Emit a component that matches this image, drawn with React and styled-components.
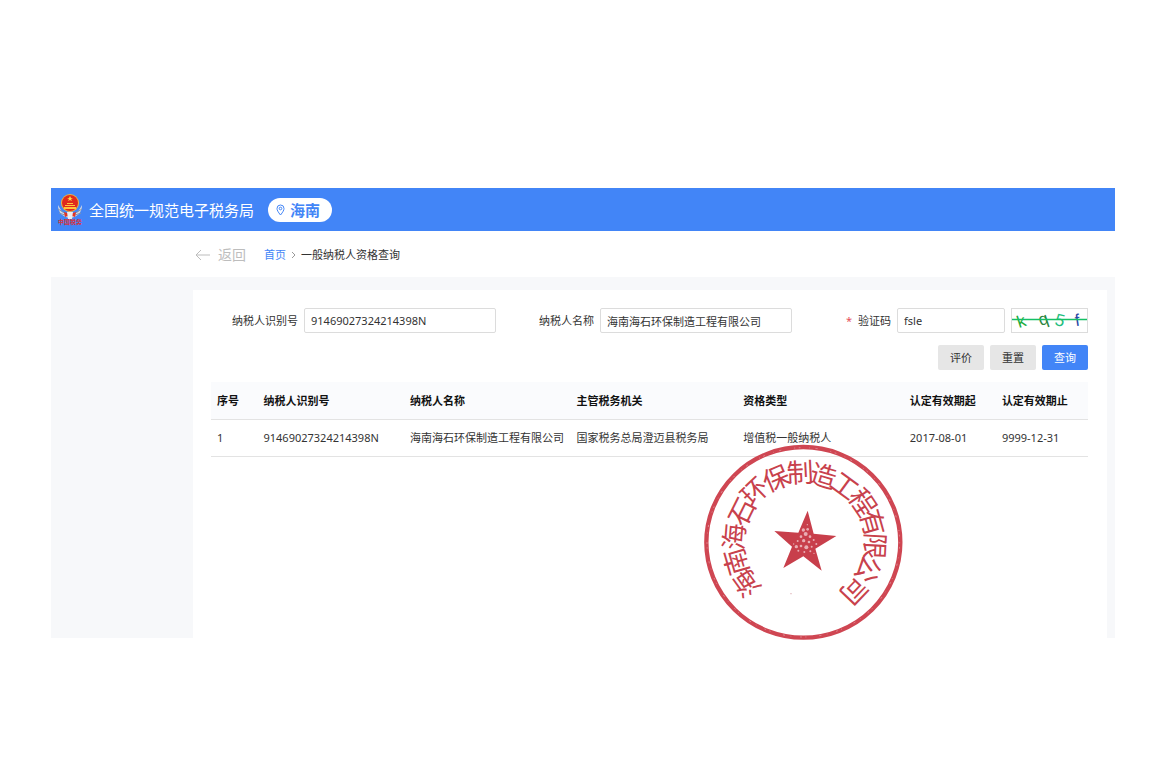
import styled, { createGlobalStyle } from "styled-components";

const GlobalStyle = createGlobalStyle`
  * {
    box-sizing: border-box;
  }
  body {
    margin: 0;
    background: #fff;
    color: #333;
    font-family: "Noto Sans", "Noto Sans CJK SC", sans-serif;
    font-size: 11px;
    line-height: 16px;
  }
  input,
  button {
    font: inherit;
    color: inherit;
  }
`;

const Page = styled.div`
  min-height: 100vh;
  padding: 188px 53px 24px 51px;
`;

const Header = styled.header`
  display: flex;
  align-items: center;
  height: 43px;
  padding-left: 5px;
  background: #4285f7;
`;

const Title = styled.h1`
  margin: 0 14px 0 5px;
  color: #fff;
  font-size: 15px;
  font-weight: 400;
  line-height: 24px;
`;

const Region = styled.button`
  display: flex;
  align-items: center;
  gap: 5px;
  height: 24px;
  padding: 0 12px 0 8px;
  border: 0;
  border-radius: 12px;
  background: #fff;
  color: #4285f7;
  font-size: 15px;
  font-weight: 700;
  line-height: 24px;
`;

const Crumbs = styled.nav`
  display: flex;
  align-items: center;
  height: 46px;
  padding: 2px 0 0 144px;
`;

const Back = styled.a`
  display: flex;
  align-items: center;
  gap: 8px;
  margin-right: 18px;
  color: #bdbdbd;
  font-size: 14px;
  text-decoration: none;
`;

const HomeLink = styled.a`
  color: #4285f7;
  text-decoration: none;
`;

const Body = styled.div`
  padding: 13px 8px 0 142px;
  background: #f7f8fa;
`;

const Panel = styled.main`
  position: relative;
  min-height: 348px;
  padding: 18px 19px 0 18px;
  background: #fff;
`;

const Form = styled.form`
  display: grid;
  grid-template-columns: repeat(3, 1fr);
  gap: 12px 11px;
  margin-bottom: 12px;
`;

const Field = styled.div`
  display: flex;
  align-items: center;
  gap: 6px;
`;

const Label = styled.label`
  flex: 1;
  text-align: right;
  white-space: nowrap;
`;

const Required = styled.span`
  margin-right: 6px;
  color: #e6505a;
`;

const Input = styled.input`
  width: ${(p) => (p.$short ? "108px" : "192px")};
  height: 25px;
  padding: 0 6px;
  border: 1px solid #dcdcdc;
  border-radius: 2px;
  background: #fff;
  outline: none;
`;

const Captcha = styled.svg`
  width: 77px;
  height: 25px;
  border: 1px solid #dcdcdc;
  overflow: visible;
`;

const Actions = styled.div`
  grid-column: 1 / -1;
  display: flex;
  justify-content: flex-end;
  gap: 6px;
`;

const Button = styled.button`
  width: 46px;
  height: 25px;
  padding: 0;
  border: 0;
  border-radius: 2px;
  background: ${(p) => (p.$primary ? "#4285f7" : "#e6e6e6")};
  color: ${(p) => (p.$primary ? "#fff" : "#333")};
`;

const Table = styled.table`
  width: 100%;
  border-collapse: separate;
  border-spacing: 0;
  table-layout: fixed;
`;

const Th = styled.th`
  width: ${(p) => p.$width};
  height: 38px;
  padding: 0 0 0 6px;
  border-bottom: 1px solid #e3e3e3;
  background: #fafbfd;
  color: #111;
  font-weight: 700;
  text-align: left;
  white-space: nowrap;
`;

const Td = styled.td`
  height: 37px;
  padding: 0 0 0 6px;
  border-bottom: 1px solid #e3e3e3;
  white-space: nowrap;
`;

const SealBox = styled.svg`
  position: absolute;
  left: 502px;
  top: 150px;
  width: 220px;
  height: 205px;
  pointer-events: none;
`;

const columns = [
  ["序号", "5.3%"],
  ["纳税人识别号", "16.7%"],
  ["纳税人名称", "19%"],
  ["主管税务机关", "19%"],
  ["资格类型", "19%"],
  ["认定有效期起", "10.5%"],
  ["认定有效期止", "10.5%"],
];

const rows = [
  [
    "1",
    "91469027324214398N",
    "海南海石环保制造工程有限公司",
    "国家税务总局澄迈县税务局",
    "增值税一般纳税人",
    "2017-08-01",
    "9999-12-31",
  ],
];

const sealChars = [
  ["海", 155, 430],
  ["南", 123, 365],
  ["海", 117, 290],
  ["石", 140, 215],
  ["环", 178, 154],
  ["保", 243, 115],
  ["制", 315, 97],
  ["造", 385, 107],
  ["工", 450, 137],
  ["程", 503, 187],
  ["有", 533, 248],
  ["限", 540, 318],
  ["公", 520, 388],
  ["司", 478, 453],
];

const specks = [
  [325, 270, 5], [338, 268, 4], [332, 282, 6], [345, 290, 4], [318, 290, 4],
  [308, 303, 3], [326, 302, 5], [342, 306, 4], [356, 300, 3], [304, 320, 5],
  [318, 318, 4], [334, 322, 6], [350, 320, 3], [310, 332, 3], [328, 336, 3],
  [346, 334, 3], [364, 312, 3], [296, 312, 2], [337, 254, 2], [357, 340, 2],
];

function Emblem() {
  return (
    <svg width="28" height="34" viewBox="0 0 28 34" role="img" aria-label="中国税务">
      <path d="M2 12C2 20 7 24 14 25c7-1 12-5 12-13l-4 7-8 3-8-3z" fill="#d8dce4" />
      <path d="M2 16l8 5M3 20l9 3M26 16l-8 5M25 20l-9 3" stroke="#8792a8" />
      <path d="M8 19l6 2 6-2-1 5-5-2-5 2z" fill="#e33225" />
      <path d="M11 19h6l-1 7h-4z" fill="#e9edf2" />
      <circle cx="14" cy="10" r="9" fill="#f3b43b" />
      <circle cx="14" cy="10" r="8" fill="#e02a1d" />
      <path d="M14 3l1 2h2l-2 1 1 2-2-1-2 1 1-2-2-1h2z" fill="#ffd84a" />
      <path d="M9 12h10v1H9zM11 10h6v1h-6zM8 14h12v2H8z" fill="#ffc63c" />
      <text
        x="14"
        y="31"
        textAnchor="middle"
        fontFamily="Liberation Serif, Noto Sans CJK SC, serif"
        fontSize="6"
        fontWeight="700"
        fill="#d8323a"
      >
        中国税务
      </text>
    </svg>
  );
}

function CaptchaImage() {
  return (
    <Captcha viewBox="0 0 75 23" role="img" aria-label="验证码图片">
      <g fontFamily="Liberation Sans, sans-serif" fontSize="17">
        <text x="5" y="18" fill="#1cab3c" transform="rotate(-18 9 12)">k</text>
        <text x="27" y="16" fill="#2b8440" transform="rotate(-18 31 12)">q</text>
        <text x="43" y="17" fill="#25be80" transform="rotate(14 48 12)">5</text>
        <text x="63" y="17" fill="#2947a5" transform="rotate(-8 65 12)">f</text>
      </g>
      <path d="M0 10.500H75" stroke="#15c065" strokeWidth="1.500" />
    </Captcha>
  );
}

function Seal() {
  return (
    <SealBox viewBox="0 0 660 615" role="img" aria-label="海南海石环保制造工程有限公司">
      <g fill="none">
        <ellipse cx="325" cy="307" rx="291" ry="286" stroke="#cf4652" strokeWidth="13" />
        <ellipse
          cx="325"
          cy="307"
          rx="289"
          ry="284"
          stroke="#e08d95"
          strokeWidth="3"
          strokeDasharray="3 11 5 27 2 17 6 39"
        />
      </g>
      <path
        d="M338 212L356 281L424 288L361 326L380 392L325 349L265 384L291 320L238 273L310 278Z"
        fill="#c83f4b"
      />
      <g fill="#e9adb3">
        {specks.map(([x, y, r]) => (
          <circle key={`${x}-${y}`} cx={x} cy={y} r={r} />
        ))}
      </g>
      <circle cx="288" cy="461" r="2" fill="#d9a5aa" />
      <g
        fill="#c8414c"
        fontFamily="Noto Sans CJK SC, sans-serif"
        fontSize="80"
        textAnchor="middle"
      >
        {sealChars.map(([char, x, y], i) => {
          const angle = (Math.atan2(x - 325, 307 - y) * 180) / Math.PI;
          return (
            <text key={i} y="30" transform={`translate(${x} ${y}) rotate(${angle})`}>
              {char}
            </text>
          );
        })}
      </g>
    </SealBox>
  );
}

function App() {
  return (
    <Page>
      <GlobalStyle />
      <Header>
        <Emblem />
        <Title>全国统一规范电子税务局</Title>
        <Region type="button">
          <svg width="9" height="12" viewBox="0 0 9 12" fill="none" stroke="#4285f7">
            <path d="M4.500 11C2 8 1 6 1 4.500a3.500 3.500 0 0 1 7 0C8 6 7 8 4.500 11z" />
            <circle cx="4.500" cy="4.500" r="1.300" />
          </svg>
          海南
        </Region>
      </Header>
      <Crumbs>
        <Back href="#">
          <svg width="15" height="12" viewBox="0 0 15 12" fill="none" stroke="#bdbdbd">
            <path d="M15 6H1M6 1L1 6l5 5" />
          </svg>
          返回
        </Back>
        <HomeLink href="#">首页</HomeLink>
        <svg width="15" height="8" viewBox="0 0 15 8" fill="none" stroke="#999">
          <path d="M6 1l3 3-3 3" />
        </svg>
        <span>一般纳税人资格查询</span>
      </Crumbs>
      <Body>
        <Panel>
          <Form onSubmit={(e) => e.preventDefault()}>
            <Field>
              <Label htmlFor="taxpayerId">纳税人识别号</Label>
              <Input id="taxpayerId" defaultValue="91469027324214398N" />
            </Field>
            <Field>
              <Label htmlFor="taxpayerName">纳税人名称</Label>
              <Input id="taxpayerName" defaultValue="海南海石环保制造工程有限公司" />
            </Field>
            <Field>
              <Label htmlFor="code">
                <Required>*</Required>验证码
              </Label>
              <Input id="code" $short defaultValue="fsle" />
              <CaptchaImage />
            </Field>
            <Actions>
              <Button type="button">评价</Button>
              <Button type="reset">重置</Button>
              <Button type="submit" $primary>
                查询
              </Button>
            </Actions>
          </Form>
          <Table>
            <thead>
              <tr>
                {columns.map(([name, width]) => (
                  <Th key={name} $width={width}>
                    {name}
                  </Th>
                ))}
              </tr>
            </thead>
            <tbody>
              {rows.map((row) => (
                <tr key={row[0]}>
                  {row.map((cell, i) => (
                    <Td key={i}>{cell}</Td>
                  ))}
                </tr>
              ))}
            </tbody>
          </Table>
          <Seal />
        </Panel>
      </Body>
    </Page>
  );
}

export default App;
